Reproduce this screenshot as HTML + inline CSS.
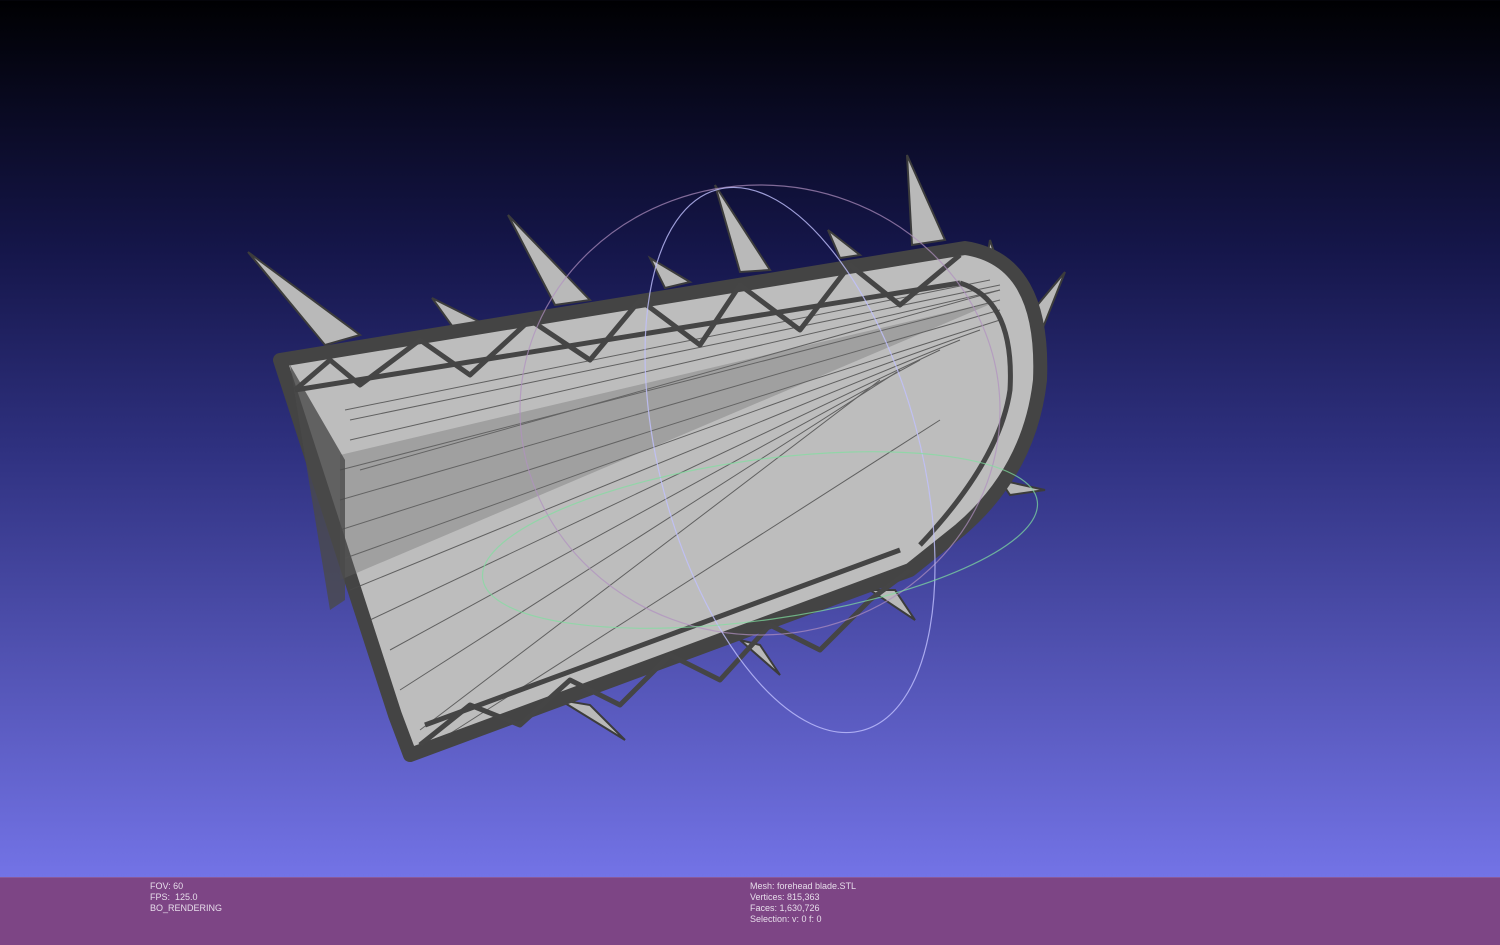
<!DOCTYPE html>
<html><head><style>
html,body{margin:0;padding:0;width:1500px;height:945px;overflow:hidden}
body{background:linear-gradient(to bottom,#000002 0px,#15164a 250px,#2f3180 450px,#5051b0 650px,#7373e6 877px);position:relative;font-family:"Liberation Sans",sans-serif}
#bar{position:absolute;left:0;top:877px;width:1500px;height:68px;background:#7d4585;border-top:1px solid #8a5a9a;color:#e6dcea;font-size:9px;line-height:11px}
#l{position:absolute;left:150px;top:3px}
#r{position:absolute;left:750px;top:3px}
svg{position:absolute;left:0;top:0}
</style></head><body>
<svg width="1500" height="877" viewBox="0 0 1500 877">
<g fill="#b9b9b9" stroke="#3c3c3c" stroke-width="2">
<polygon points="248,252 360,335 325,345"/>
<polygon points="508,215 590,300 555,305"/>
<polygon points="715,185 770,270 740,272"/>
<polygon points="907,155 945,240 912,245"/>
<polygon points="1065,272 1025,320 1040,335"/>
<polygon points="432,298 480,322 455,330"/>
<polygon points="650,258 690,282 665,288"/>
<polygon points="828,230 860,255 840,258"/>
<polygon points="990,240 1000,270 985,270"/>
<polygon points="560,700 625,740 590,705"/>
<polygon points="740,640 780,675 760,645"/>
<polygon points="870,590 915,620 895,590"/>
<polygon points="1000,480 1045,490 1010,495"/>
</g>
<path d="M280,360 L965,248 Q1045,260 1040,380 Q1030,470 960,530 L910,570 L410,755 L395,715 Z" fill="#bdbdbd" stroke="#444" stroke-width="14" stroke-linejoin="round"/>
<g stroke="#4a4a4a" stroke-width="1" opacity="0.8">
<line x1="340" y1="470" x2="1000" y2="300"/><line x1="340" y1="500" x2="1000" y2="310"/>
<line x1="340" y1="530" x2="1000" y2="320"/><line x1="340" y1="560" x2="980" y2="330"/>
<line x1="350" y1="590" x2="960" y2="340"/><line x1="370" y1="620" x2="940" y2="350"/>
<line x1="390" y1="650" x2="920" y2="360"/><line x1="400" y1="690" x2="900" y2="370"/>
<line x1="420" y1="730" x2="880" y2="380"/><line x1="350" y1="440" x2="1000" y2="290"/>
<line x1="350" y1="420" x2="1000" y2="285"/><line x1="345" y1="410" x2="990" y2="280"/>
<line x1="360" y1="470" x2="1000" y2="290"/><line x1="440" y1="740" x2="940" y2="420"/>
</g>
<path d="M340,455 L1000,300 L340,580 Z" fill="#6a6a6a" opacity="0.35"/>
<path d="M290,365 L345,460 L345,600 L330,610 Z" fill="#4a4a4a" opacity="0.8"/>
<!-- truss bands -->
<g fill="none" stroke="#454545" stroke-width="5" stroke-linejoin="round">
<path d="M295,390 L960,283"/>
<path d="M295,390 L330,360 L360,385 L420,340 L470,375 L530,320 L590,360 L640,300 L700,345 L740,285 L800,330 L850,265 L900,305 L960,255"/>
<path d="M425,725 L900,550"/>
<path d="M420,745 L470,705 L520,725 L570,680 L620,705 L670,655 L720,680 L770,625 L820,650 L870,600 L910,570"/>
<path d="M960,283 Q1015,300 1010,390 Q1000,460 920,545"/>
</g>
<g fill="none" stroke-width="1.2">
<ellipse cx="760" cy="410" rx="240" ry="225" stroke="#b090c0" opacity="0.7"/>
<ellipse cx="790" cy="460" rx="130" ry="280" stroke="#c0c0ff" transform="rotate(-15 790 460)" opacity="0.8"/>
<ellipse cx="760" cy="540" rx="280" ry="80" stroke="#80e0a0" transform="rotate(-8 760 540)" opacity="0.7"/>
</g>
</svg>
<div id="bar">
<div id="l">FOV: 60<br>FPS:&nbsp;&nbsp;125.0<br>BO_RENDERING</div>
<div id="r">Mesh: forehead blade.STL<br>Vertices: 815,363<br>Faces: 1,630,726<br>Selection: v: 0 f: 0</div>
</div>
</body></html>
